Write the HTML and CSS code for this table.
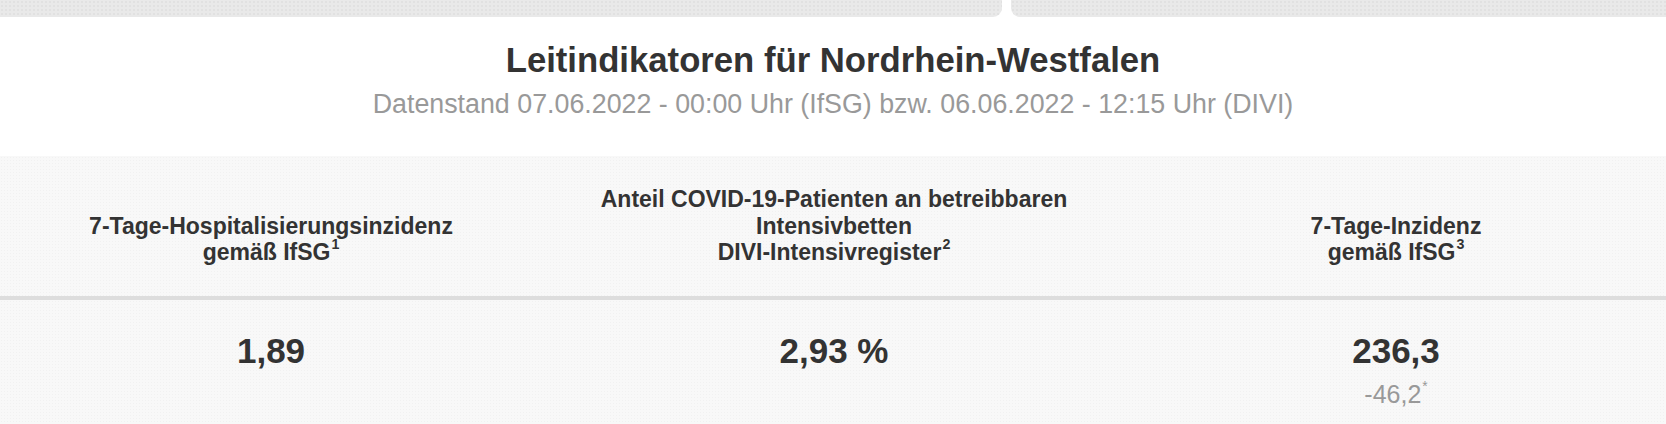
FILE: index.html
```html
<!DOCTYPE html>
<html lang="de">
<head>
<meta charset="utf-8">
<title>Leitindikatoren für Nordrhein-Westfalen</title>
<link rel="stylesheet" href="styles.css">
</head>
<body>
<div class="tabs">
  <div class="tab tab-left"></div>
  <div class="tab tab-right"></div>
</div>
<header class="heading">
  <h1 class="title">Leitindikatoren für Nordrhein-Westfalen</h1>
  <p class="subtitle">Datenstand 07.06.2022 - 00:00 Uhr (IfSG) bzw. 06.06.2022 - 12:15 Uhr (DIVI)</p>
</header>
<section class="indicators">
  <div class="row row-head">
    <div class="cell">7-Tage-Hospitalisierungsinzidenz<br>gemäß IfSG<sup>1</sup></div>
    <div class="cell">Anteil COVID-19-Patienten an betreibbaren<br>Intensivbetten<br>DIVI-Intensivregister<sup>2</sup></div>
    <div class="cell">7-Tage-Inzidenz<br>gemäß IfSG<sup>3</sup></div>
  </div>
  <div class="row row-values">
    <div class="cell"><div class="value">1,89</div></div>
    <div class="cell"><div class="value">2,93 %</div></div>
    <div class="cell"><div class="value">236,3</div><div class="delta">-46,2<sup>*</sup></div></div>
  </div>
</section>
</body>
</html>
```
FILE: styles.css
```css
html, body {
  margin: 0;
  padding: 0;
  background: #ffffff;
  font-family: "Liberation Sans", Arial, Helvetica, sans-serif;
  color: #333333;
}

.tabs {
  display: flex;
  gap: 9px;
  height: 17px;
}

.tab {
  background-color: #e9e9e9;
  background-image: radial-gradient(circle, #e1e1e1 0.7px, transparent 0.9px);
  background-size: 4px 4px;
}

.tab-left {
  width: 1002px;
  border-bottom-right-radius: 9px;
}

.tab-right {
  flex: 1;
  border-bottom-left-radius: 9px;
}

.heading {
  text-align: center;
  padding: 22px 0 36px;
}

.title {
  margin: 0;
  font-size: 34.7px;
  line-height: 42px;
  font-weight: bold;
  color: #333333;
}

.subtitle {
  margin: 7px 0 0;
  font-size: 26.8px;
  line-height: 32px;
  color: #999999;
}

.indicators {
  background-color: #f8f8f8;
  background-image: radial-gradient(circle, #f1f1f1 0.7px, transparent 0.9px);
  background-size: 3px 3px;
}

.row {
  display: grid;
  grid-template-columns: 542px 584px 1fr;
}

.row-head {
  border-bottom: 4px solid #dddddd;
}

.row-head .cell {
  align-self: end;
  text-align: center;
  padding: 30px 0 30px;
  font-size: 23px;
  line-height: 26.5px;
  font-weight: bold;
  color: #333333;
}

.row-values .cell {
  text-align: center;
  padding: 31px 0 20px;
}

sup {
  font-size: 62%;
  line-height: 0;
  vertical-align: 0.75em;
  margin-left: 1px;
}

.value {
  font-size: 35px;
  line-height: 40px;
  font-weight: bold;
  color: #333333;
}

.delta {
  margin-top: 9px;
  font-size: 25px;
  line-height: 29px;
  color: #999999;
}

.delta sup {
  font-size: 55%;
  vertical-align: 0.85em;
}
```
